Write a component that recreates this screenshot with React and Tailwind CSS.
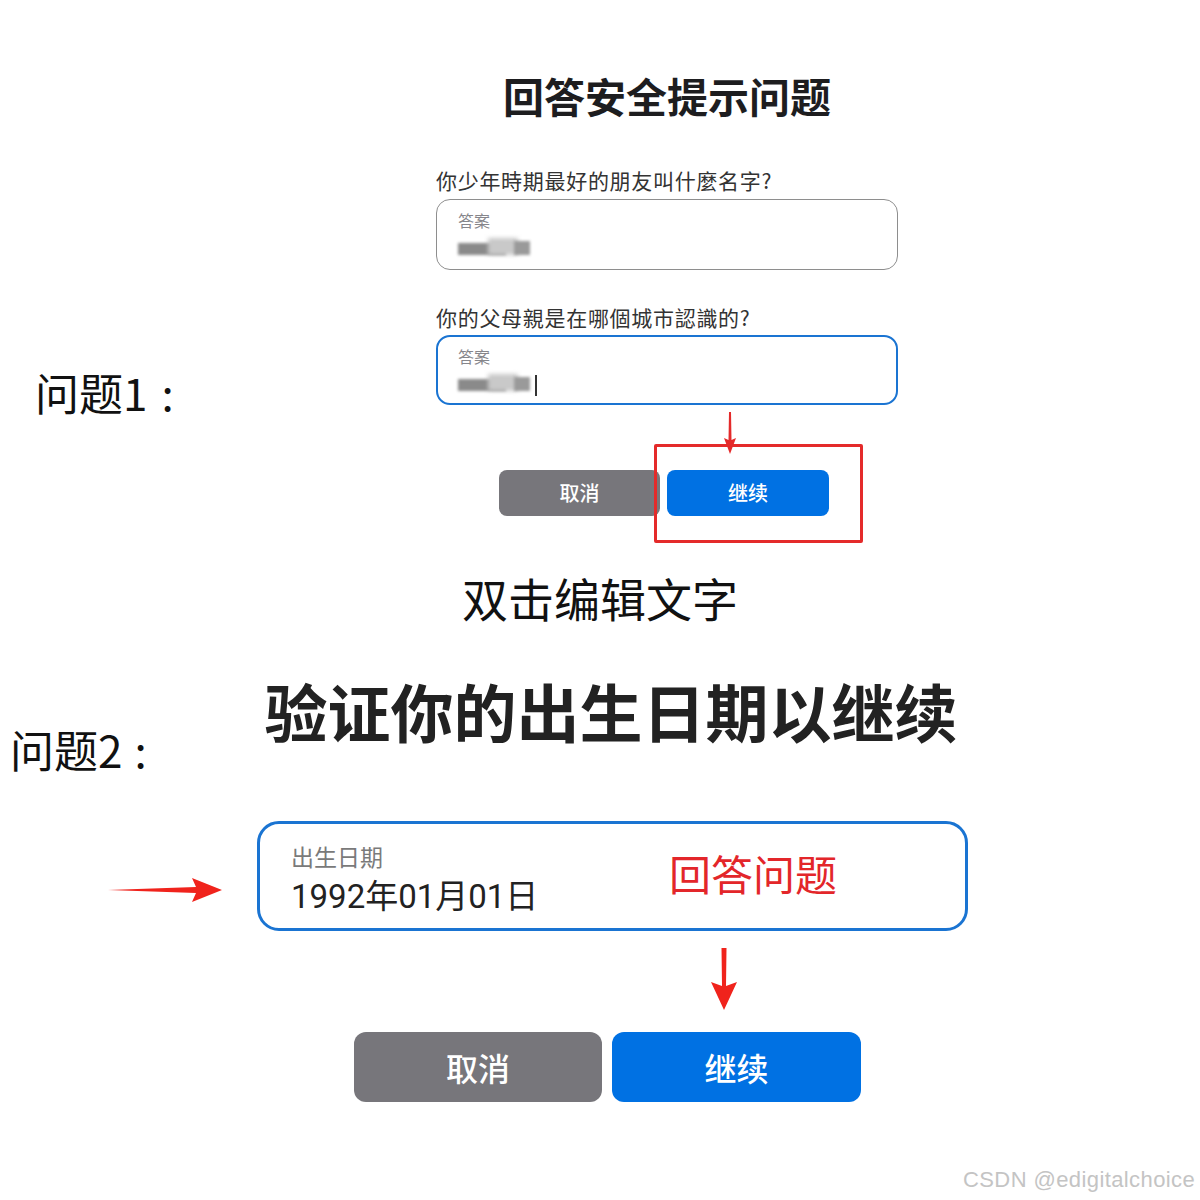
const cjk = { fontFamily: '"Noto Sans CJK SC", "Noto Sans", sans-serif' };

const BlurValue = ({ cursor }) => (
  <div className="relative mt-[6px] h-[22px] w-[90px]">
    <div className="absolute left-0 top-[7px] h-[12px] w-[48px] bg-[#8a8a8a] blur-[1.5px]" />
    <div className="absolute left-[30px] top-[2px] h-[17px] w-[30px] bg-[#c9c9c9] blur-[2px]" />
    <div className="absolute left-[56px] top-[5px] h-[14px] w-[16px] bg-[#9a9a9a] blur-[1.5px]" />
    {cursor && <div className="absolute left-[77px] top-[3px] h-[21px] w-[1.5px] bg-[#333]" />}
  </div>
);

const AnswerField = ({ focused, cursor }) => (
  <div
    className={
      focused
        ? 'mt-[6px] h-[70px] rounded-[14px] border-2 border-[#1a74d2] px-[20px] pt-[9px]'
        : 'mt-[7px] h-[71px] rounded-[14px] border-[1.5px] border-[#8e8e8e] px-[21px] pt-[10px]'
    }
  >
    <div className="text-[16px] leading-[20px] text-[#86868b]">答案</div>
    <BlurValue cursor={cursor} />
  </div>
);

export default function App() {
  return (
    <div className="relative h-[1200px] w-[1200px] overflow-hidden bg-white text-[#1d1d1f]" style={cjk}>
      {/* Security question form */}
      <div className="ml-[436px] flex w-[462px] flex-col pt-[74px]">
        <h1 className="text-center text-[41px] font-bold leading-[42px] text-[#1d1d1f]">回答安全提示问题</h1>
        <div className="mt-[52px] text-[21px] leading-[24px] tracking-[0.7px] text-[#333]">你少年時期最好的朋友叫什麼名字?</div>
        <AnswerField />
        <div className="mt-[35px] text-[21px] leading-[24px] tracking-[0.7px] text-[#333]">你的父母親是在哪個城市認識的?</div>
        <AnswerField focused cursor />
        <div className="ml-[63px] mt-[65px] flex gap-[7px]">
          <button className="h-[46px] w-[161px] rounded-[8px] bg-[#77767b] text-[20px] font-medium text-white">取消</button>
          <button className="h-[46px] w-[162px] rounded-[8px] bg-[#0071e3] text-[20px] font-medium text-white">继续</button>
        </div>
      </div>

      <div className="mt-[58px] text-center text-[46px] leading-[46px] text-[#111]">双击编辑文字</div>

      <h2 className="mt-[58px] pl-[22px] text-center text-[63px] font-bold leading-[63px] text-[#222]">验证你的出生日期以继续</h2>

      {/* Birthday field */}
      <div className="relative ml-[257px] mt-[80px] h-[110px] w-[711px] rounded-[22px] border-[3px] border-[#1a74d2] pl-[31px] pt-[19px]">
        <div className="text-[23px] leading-[26px] text-[#7a7a7a]">出生日期</div>
        <div className="mt-[9px] text-[33px] leading-[38px] text-[#222]" style={{ fontFamily: 'Roboto, "Noto Sans CJK SC", sans-serif' }}>
          1992年01月01日
        </div>
        <div className="absolute left-[409px] top-[26px] text-[42px] leading-[46px] text-[#e3262a]">回答问题</div>
      </div>

      <div className="ml-[354px] mt-[101px] flex gap-[10px]">
        <button className="h-[70px] w-[248px] rounded-[12px] bg-[#77767b] text-[32px] font-medium text-white">取消</button>
        <button className="h-[70px] w-[249px] rounded-[12px] bg-[#0071e3] text-[32px] font-medium text-white">继续</button>
      </div>

      {/* Annotations */}
      <div className="absolute left-[35px] top-[367px] flex text-[44px] leading-[50px] text-[#111]">
        <span>问题1</span>
        <span className="ml-[14px]">:</span>
      </div>
      <div className="absolute left-[10px] top-[724px] flex text-[44px] leading-[50px] text-[#111]">
        <span>问题2</span>
        <span className="ml-[12px]">:</span>
      </div>

      <div className="absolute left-[654px] top-[444px] h-[99px] w-[209px] rounded-[2px] border-[3px] border-[#e42a2a]" />

      <svg className="absolute left-[722px] top-[412px]" width="16" height="42" viewBox="0 0 16 42">
        <path d="M7 0 L9 0 L9.5 28 L14 26 L8 42 L2 26 L6.5 28 Z" fill="#e42a2a" />
      </svg>

      <svg className="absolute left-[108px] top-[876px]" width="114" height="28" viewBox="0 0 114 28">
        <path d="M0 14 L88 11 L84 2 L114 14 L84 26 L88 17 Z" fill="#f0231c" />
      </svg>

      <svg className="absolute left-[710px] top-[948px]" width="28" height="62" viewBox="0 0 28 62">
        <path d="M11.5 0 L16.5 0 L16 38 L27 34 L14 62 L1 34 L12 38 Z" fill="#f0231c" />
      </svg>

      <div
        className="absolute left-[963px] top-[1166px] text-[22px] leading-[28px] tracking-[0.4px] text-[#c4c4c4]"
        style={{ fontFamily: '"Liberation Sans", Arial, sans-serif' }}
      >
        CSDN @edigitalchoice
      </div>
    </div>
  );
}
